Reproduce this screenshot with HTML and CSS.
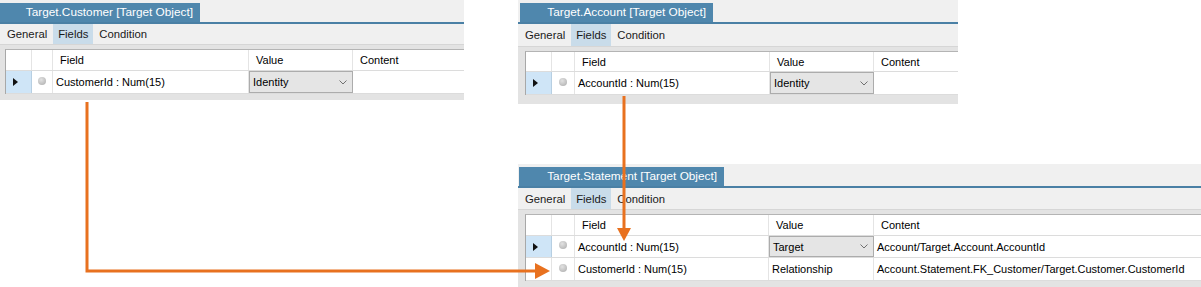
FILE: index.html
```html
<!DOCTYPE html>
<html>
<head>
<meta charset="utf-8">
<link rel="stylesheet" href="styles.css">
</head>
<body>
<div class="canvas">
  <div class="top-row">
    <section class="panel panel-customer">
      <div class="titlebar"><div class="title">Target.Customer [Target Object]</div></div>
      <div class="tabstrip">
        <span class="tab">General</span><span class="tab active">Fields</span><span class="tab">Condition</span>
      </div>
      <div class="grid">
        <div class="table">
          <div class="row head">
            <div class="cell"></div><div class="cell"></div>
            <div class="cell htext">Field</div><div class="cell htext">Value</div><div class="cell htext">Content</div>
          </div>
          <div class="row data">
            <div class="cell rowhead current"><span class="tri"></span></div>
            <div class="cell ind"><span class="dot"></span></div>
            <div class="cell text">CustomerId : Num(15)</div>
            <div class="cell combo"><span>Identity</span><svg class="chev" width="8" height="5" viewBox="0 0 8 5"><path d="M0.5 0.5 L4 4 L7.5 0.5" fill="none" stroke="#707070" stroke-width="1"/></svg></div>
            <div class="cell"></div>
          </div>
        </div>
      </div>
    </section>

    <section class="panel panel-account">
      <div class="titlebar"><div class="title">Target.Account [Target Object]</div></div>
      <div class="tabstrip">
        <span class="tab">General</span><span class="tab active">Fields</span><span class="tab">Condition</span>
      </div>
      <div class="grid">
        <div class="table">
          <div class="row head">
            <div class="cell"></div><div class="cell"></div>
            <div class="cell htext">Field</div><div class="cell htext">Value</div><div class="cell htext">Content</div>
          </div>
          <div class="row data">
            <div class="cell rowhead current"><span class="tri"></span></div>
            <div class="cell ind"><span class="dot"></span></div>
            <div class="cell text">AccountId : Num(15)</div>
            <div class="cell combo"><span>Identity</span><svg class="chev" width="8" height="5" viewBox="0 0 8 5"><path d="M0.5 0.5 L4 4 L7.5 0.5" fill="none" stroke="#707070" stroke-width="1"/></svg></div>
            <div class="cell"></div>
          </div>
        </div>
      </div>
    </section>
  </div>

  <section class="panel panel-statement">
    <div class="titlebar"><div class="title">Target.Statement [Target Object]</div></div>
    <div class="tabstrip">
      <span class="tab">General</span><span class="tab active">Fields</span><span class="tab">Condition</span>
    </div>
    <div class="grid">
      <div class="table">
        <div class="row head">
          <div class="cell"></div><div class="cell"></div>
          <div class="cell htext">Field</div><div class="cell htext">Value</div><div class="cell htext">Content</div>
        </div>
        <div class="row data">
          <div class="cell rowhead current"><span class="tri"></span></div>
          <div class="cell ind"><span class="dot"></span></div>
          <div class="cell text">AccountId : Num(15)</div>
          <div class="cell combo"><span>Target</span><svg class="chev" width="8" height="5" viewBox="0 0 8 5"><path d="M0.5 0.5 L4 4 L7.5 0.5" fill="none" stroke="#707070" stroke-width="1"/></svg></div>
          <div class="cell text">Account/Target.Account.AccountId</div>
        </div>
        <div class="row data">
          <div class="cell rowhead"></div>
          <div class="cell ind"><span class="dot"></span></div>
          <div class="cell text">CustomerId : Num(15)</div>
          <div class="cell text">Relationship</div>
          <div class="cell text">Account.Statement.FK_Customer/Target.Customer.CustomerId</div>
        </div>
      </div>
    </div>
  </section>

  <svg class="links" width="1201" height="287" viewBox="0 0 1201 287">
    <polyline points="87,102 87,271 538,271" fill="none" stroke="#e8711f" stroke-width="3"/>
    <polygon points="535,263 550,271 535,279" fill="#e8711f"/>
    <line x1="624" y1="96" x2="624" y2="231" stroke="#e8711f" stroke-width="3"/>
    <polygon points="617,228 631,228 624,241" fill="#e8711f"/>
  </svg>
</div>
</body>
</html>
```

FILE: styles.css
```css
* { box-sizing: border-box; }

body {
  margin: 0;
  background: #ffffff;
  font-family: "Liberation Sans", Arial, sans-serif;
  font-size: 11px;
  color: #000;
}

.canvas {
  position: relative;
  width: 1201px;
  height: 287px;
  overflow: hidden;
}

.top-row {
  display: flex;
  align-items: flex-start;
}

.panel {
  background: #f0f0f0;
  display: flex;
  flex-direction: column;
}

.panel-customer {
  width: 464px;
  --tab-w: 200px;
  --tab-ml: 0px;
  --strip: 20px;
  --head: 21px;
  --row: 23px;
  --fill: 6px;
  --gpad: 5px;
  --cols: 26px 21px 196px 104px 1fr;
}

.panel-account {
  margin-left: 54px;
  width: 440px;
  --tab-w: 193px;
  --tab-ml: 2px;
  --strip: 22px;
  --head: 20px;
  --row: 23px;
  --fill: 9px;
  --gpad: 7px;
  --cols: 26px 23px 195px 104px 1fr;
}

.panel-statement {
  margin-top: 60px;
  margin-left: 518px;
  width: 683px;
  height: 123px;
  --tab-w: 205px;
  --tab-ml: 1px;
  --strip: 21px;
  --head: 21px;
  --row: 22px;
  --fill: 6px;
  --gpad: 7px;
  --cols: 26px 23px 194px 105px 1fr;
}

.panel-statement .row.data + .row.data { height: 23px; }

.titlebar {
  display: flex;
  padding-top: 3px;
  border-bottom: 2px solid #4a80a5;
}

.title {
  width: var(--tab-w);
  margin-left: var(--tab-ml);
  height: 19px;
  line-height: 19px;
  background: #4f87ad;
  color: #fff;
  font-size: 11.8px;
  text-align: right;
  padding-right: 7px;
  white-space: nowrap;
}

.tabstrip {
  display: flex;
  height: var(--strip);
  align-items: stretch;
  font-size: 11.3px;
}

.tab {
  display: flex;
  align-items: center;
  padding: 0 6px 0 6px;
  color: #1a1a1a;
}

.tab:first-child { padding-left: 7px; }

.tab.active {
  background: #c9dcea;
  padding: 0 5px 0 5px;
}

.grid {
  flex: 1;
  border-top: 1px solid #d6d6d6;
  background: #e3e3e3;
  padding: 4px 0 var(--fill) var(--gpad);
}

.table {
  background: #fff;
  border-top: 1px solid #b4b4b4;
  border-left: 1px solid #a8a8a8;
}

.row {
  display: grid;
  grid-template-columns: var(--cols);
  border-bottom: 1px solid #dcdcdc;
}

.row.head { height: var(--head); }
.row.data { height: var(--row); }

.cell {
  border-right: 1px solid #e4e4e4;
  display: flex;
  align-items: center;
  white-space: nowrap;
  overflow: hidden;
}

.cell:last-child { border-right: none; }

.htext { padding-left: 7px; }
.text { padding-left: 3px; }

.rowhead.current {
  background: #cfe5f7;
  border-right-color: #b7cfe2;
}

.tri {
  margin-left: 7px;
  width: 0;
  height: 0;
  border-top: 4.5px solid transparent;
  border-bottom: 4.5px solid transparent;
  border-left: 5px solid #111;
}

.ind { justify-content: center; padding-bottom: 3px; }

.dot {
  width: 8px;
  height: 8px;
  border-radius: 50%;
  background: radial-gradient(circle at 40% 35%, #e2e2e2 0%, #c4c4c4 55%, #a9a9a9 100%);
}

.combo {
  background: #e5e5e5;
  border: 1px solid #acacac;
  justify-content: space-between;
  padding: 0 5px 0 3px;
}

.chev { display: block; }

.links {
  position: absolute;
  left: 0;
  top: 0;
  pointer-events: none;
}
```
